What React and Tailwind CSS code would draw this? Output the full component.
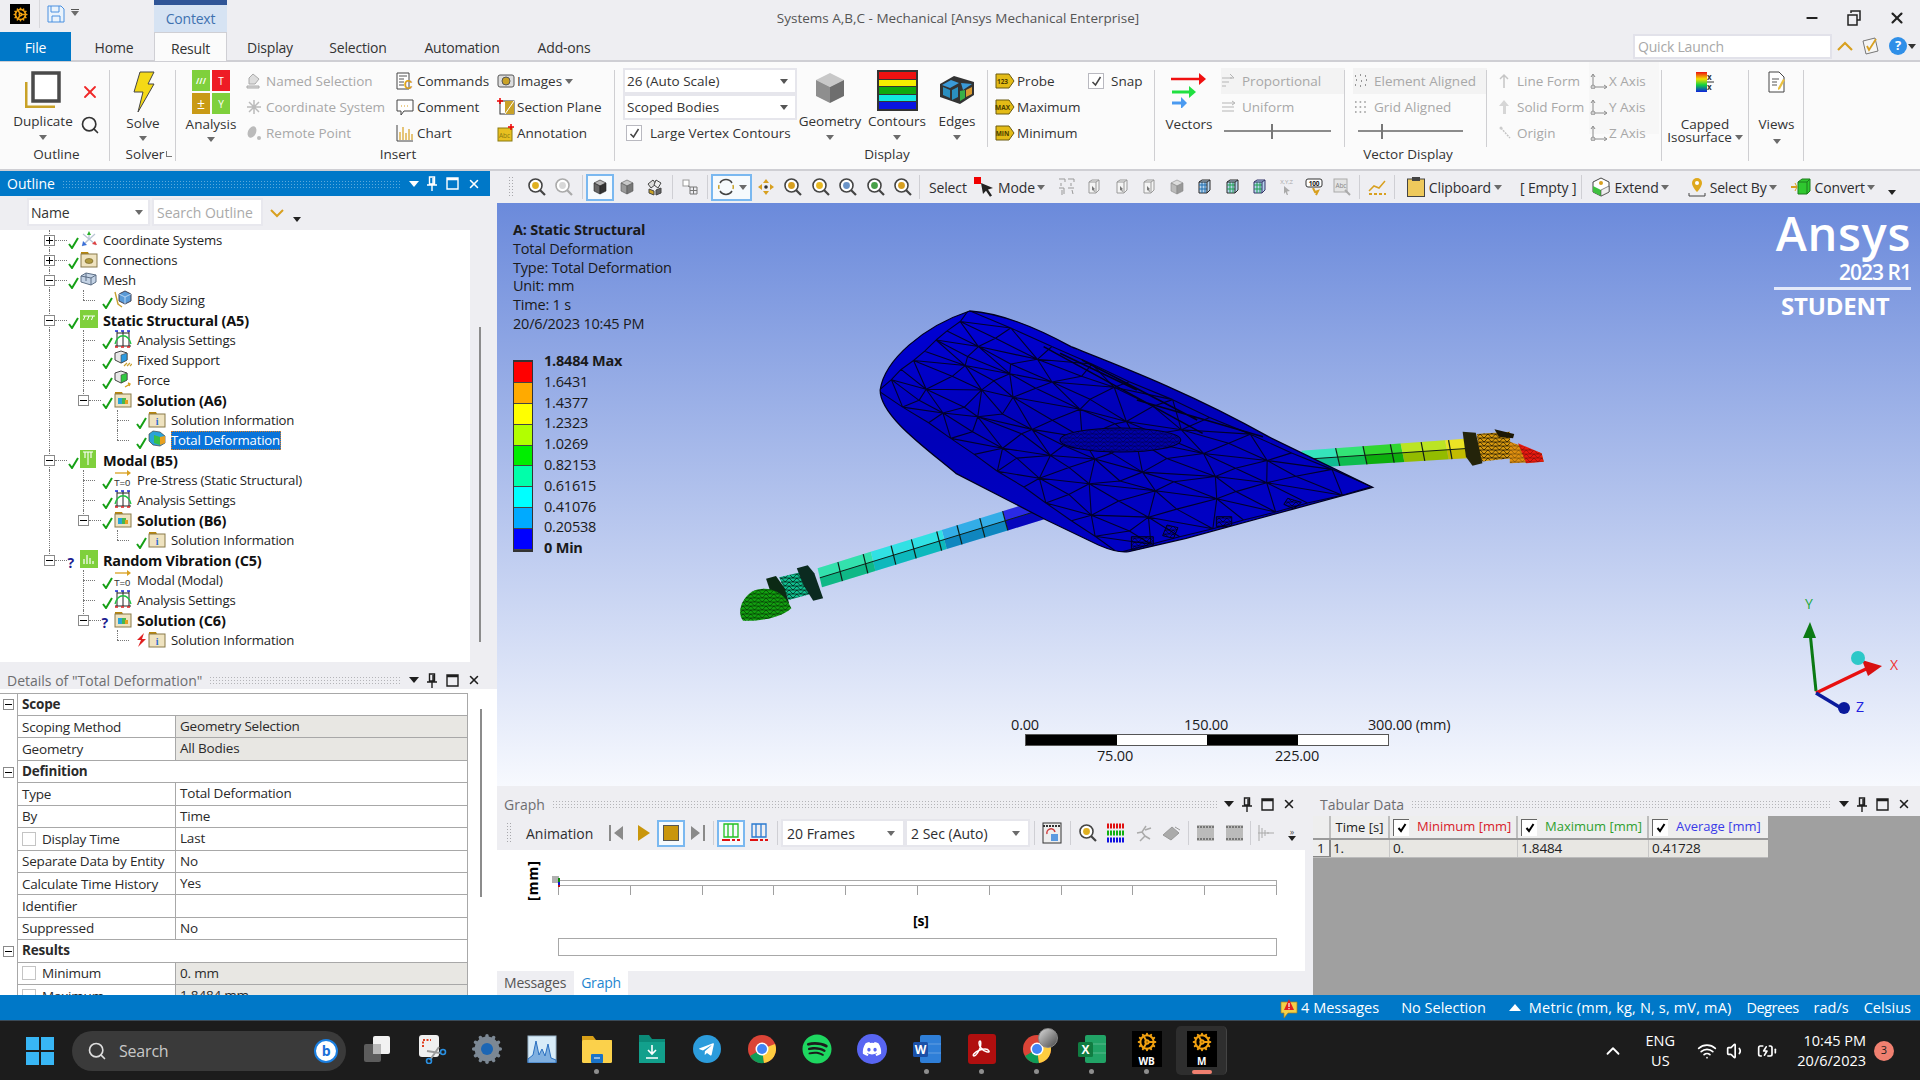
import React from "react";
import { Cog, Search, ChevronUp, Wifi, Volume1, BatteryCharging, Minus, X } from "lucide-react";
import { FaDiscord, FaSpotify, FaTelegramPlane } from "react-icons/fa";

// ---------- small drawing helpers ----------
const S = ({ w = 16, h = 16, vb = "0 0 16 16", children, className = "" }) => (
  <svg width={w} height={h} viewBox={vb} className={`shrink-0 ${className}`}>
    {children}
  </svg>
);

const Caret = ({ color = "#6b6b6b" }) => (
  <S w={8} h={5} vb="0 0 8 5">
    <path d="M0 0h8L4 5z" fill={color} />
  </S>
);

const Cube = ({ top = "#c8c8c8", left = "#9a9a9a", right = "#777", stroke = "#555" }) => (
  <S>
    <path d="M8 1l6 3-6 3-6-3z" fill={top} stroke={stroke} strokeWidth=".6" />
    <path d="M2 4l6 3v8l-6-3z" fill={left} stroke={stroke} strokeWidth=".6" />
    <path d="M14 4l-6 3v8l6-3z" fill={right} stroke={stroke} strokeWidth=".6" />
  </S>
);

const Glass = ({ fill = "#f0c040", ring = "#444" }) => (
  <S w={20} h={20} vb="0 0 20 20">
    <circle cx="8.5" cy="8.5" r="6.5" fill="#fff" stroke={ring} strokeWidth="1.6" />
    <circle cx="8.5" cy="8.5" r="3.4" fill={fill} />
    <path d="M13 13l5 5" stroke={ring} strokeWidth="2.2" />
  </S>
);

const Tag = ({ text }) => (
  <S w={20} h={16} vb="0 0 20 16">
    <path d="M1 1h13l5 7-5 7H1z" fill="#e3bb16" stroke="#6b5a10" strokeWidth="1" />
    <text x="7.5" y="11" fontSize="6.5" textAnchor="middle" fill="#4a3c00" fontWeight="700">{text}</text>
  </S>
);

const MiniBox = ({ c = "#9a9a9a" }) => (
  <S>
    <path d="M3 3l3-2h7v10l-3 3H3z" fill="#f4f4f4" stroke={c} />
    <path d="M3 3h7v11M10 3l3-2" fill="none" stroke={c} />
    <path d="M6 7l3 3-1 .4 1 2-1 .4-1-2-1 1z" fill="#777" />
  </S>
);

const GridBox = ({ a = "#1f6fb0", b = "#2a2a2a" }) => (
  <S>
    <path d="M3 3l3-2h8v10l-3 3H3z" fill="#b6d4ee" stroke={b} />
    <path d="M3 6h8M3 10h8M6 3v11M9 3v11" stroke={a} />
    <path d="M3 3h8v11M11 3l3-2" fill="none" stroke={b} />
  </S>
);

// ---------- outline tree icons ----------
const Folder = ({ children }) => (
  <S w={18} h={18} vb="0 0 18 18">
    <path d="M1 4V2h7l1 2z" fill="#b8860b" />
    <rect x="1" y="4" width="16" height="13" fill="#efe3c0" stroke="#8a7a4a" />
    {children}
  </S>
);
const SolutionContent = () => (
  <>
    <rect x="4" y="8" width="4" height="6" fill="#2aa3d8" />
    <rect x="8" y="8" width="4" height="6" fill="#48b848" />
    <rect x="11" y="10" width="3" height="4" fill="#e2a020" />
  </>
);
const TreeIcon = ({ t }) => {
  if (t === "coord")
    return (
      <S w={18} h={18} vb="0 0 18 18">
        <path d="M9 9L2 16M9 9l7 6M9 9V3M3 4l12 10M15 4L4 14" stroke="#b9c4d4" strokeWidth="1.2" />
        <path d="M9 1l2 4H7z" fill="#28b028" />
        <path d="M2 16l1-5 4 4z" fill="#3a6fd8" />
        <path d="M17 15l-5-1 3-3z" fill="#e04040" />
      </S>
    );
  if (t === "conn")
    return (
      <Folder>
        <ellipse cx="9" cy="11" rx="4" ry="2.5" fill="#b09a40" stroke="#6b5a20" strokeWidth=".6" />
      </Folder>
    );
  if (t === "mesh")
    return (
      <S w={18} h={18} vb="0 0 18 18">
        <path d="M1 6l5-3 10 2v7l-5 3-10-3z" fill="#c3d2e4" stroke="#5d6f86" />
        <path d="M1 6l10 2v7M11 8l5-3M6 3v8" fill="none" stroke="#5d6f86" />
      </S>
    );
  if (t === "sizing")
    return (
      <S w={18} h={18} vb="0 0 18 18">
        <path d="M1 2l3 12 4 3" fill="none" stroke="#c8a030" strokeWidth="1.4" />
        <path d="M11 1l6 3v7l-6 3-6-3V4z" fill="#5a9ad8" stroke="#445" />
        <path d="M5 4l6 3 6-3M11 7v7" fill="none" stroke="#dfefff" strokeWidth=".7" />
      </S>
    );
  if (t === "static")
    return (
      <S w={18} h={18} vb="0 0 18 18">
        <rect width="18" height="18" fill="#7fd03c" />
        <path d="M3 6h12" stroke="#fff" />
        <path d="M5 6L3.5 10M9 6l-1.5 4M13 6l-1.5 4" stroke="#fff" />
      </S>
    );
  if (t === "modal")
    return (
      <S w={18} h={18} vb="0 0 18 18">
        <rect width="16" height="18" fill="#7fd03c" />
        <path d="M3 2h10M8 2v13M5 2v6M11 2v6" stroke="#fff" strokeWidth="1.1" />
      </S>
    );
  if (t === "random")
    return (
      <S w={18} h={18} vb="0 0 18 18">
        <rect width="18" height="18" fill="#7fd03c" />
        <path d="M4 14V9M7 14V5M10 14V8M13 14v-3" stroke="#fff" strokeWidth="1.2" />
      </S>
    );
  if (t === "settings")
    return (
      <S w={18} h={18} vb="0 0 18 18">
        <path d="M1 16h16M3 1v15M9 1v15M15 1v15M3 3h12" stroke="#222" />
        <path d="M1 14C4 3 14 3 17 14" fill="none" stroke="#1ec040" strokeWidth="1.3" />
        <path d="M1 1h3M7 1h3M13 1h3" stroke="#1c2cd8" strokeWidth="1.5" />
        <path d="M1 17h3M7 17h3M13 17h3" stroke="#e02020" strokeWidth="1.5" />
      </S>
    );
  if (t === "fixed" || t === "force") {
    const side = t === "fixed" ? "#2d9ae0" : "#30c840";
    return (
      <S w={18} h={18} vb="0 0 18 18">
        <path d="M7 1l6 2v7l-6 3-6-3V3z" fill="#e8e8e8" stroke="#444" />
        <path d="M7 5l6-2v7l-6 3z" fill={side} stroke="#444" strokeWidth=".6" />
        {t === "fixed" ? (
          <path d="M10 16l3-3M13 16l3-3M16 16l2-2" stroke="#c8a030" strokeWidth="1.2" />
        ) : (
          <path d="M11 17l5-3M14 13l2 1-1 2" stroke="#d8a020" strokeWidth="1.4" fill="none" />
        )}
      </S>
    );
  }
  if (t === "solution")
    return (
      <Folder>
        <SolutionContent />
      </Folder>
    );
  if (t === "info")
    return (
      <Folder>
        <text x="9" y="15" fontSize="10" fontWeight="700" fontFamily="Liberation Serif" textAnchor="middle" fill="#2a6ad0">i</text>
      </Folder>
    );
  if (t === "deform")
    return (
      <S w={18} h={18} vb="0 0 18 18">
        <path d="M1 4l4-3 7 1 5 4v7l-5 3-7-1-4-4z" fill="#2aa3d8" stroke="#444" strokeWidth=".7" />
        <path d="M6 5l6 2v8l-6-2z" fill="#38c048" />
        <path d="M12 7l5-1v7l-5 2z" fill="#e8a020" />
      </S>
    );
  // pre-stress / T=0
  return (
    <S w={18} h={18} vb="0 0 18 18">
      <path d="M1 3h13" stroke="#d8a020" strokeWidth="1.3" />
      <path d="M13 0l4 3-4 3z" fill="#d8a020" />
      <text x="0" y="16" fontSize="9.5" fontFamily="Liberation Sans" fill="#333">T=0</text>
    </S>
  );
};

const Check = () => (
  <S w={11} h={12} vb="0 0 11 12">
    <path d="M1 7l3 4 6-10" fill="none" stroke="#16a016" strokeWidth="2" />
  </S>
);
const Status = ({ s }) => {
  if (s === "?") return <span className="w-[11px] text-[14px] leading-none font-bold text-[#1c1c90] mt-[6px]">?</span>;
  if (s === "bolt")
    return (
      <S w={11} h={14} vb="0 0 11 14">
        <path d="M8 0L1 7h4l-3 7 8-8H6z" fill="#e02020" />
      </S>
    );
  return (
    <span className="mt-[5px]">
      <Check />
    </span>
  );
};

const Expander = ({ open }) => (
  <span className="relative w-[11px] h-[11px] border border-[#8a8a8a] bg-white flex items-center justify-center shrink-0">
    <span className="w-[7px] h-px bg-black" />
    {!open && <span className="absolute h-[7px] w-px bg-black" />}
  </span>
);

// y center of each row is 20px apart, starting at 240
const treeRows = [
  { l: 1, exp: "+", icon: "coord", text: "Coordinate Systems", v: [49] },
  { l: 1, exp: "+", icon: "conn", text: "Connections", v: [49] },
  { l: 1, exp: "-", icon: "mesh", text: "Mesh", v: [49] },
  { l: 2, icon: "sizing", text: "Body Sizing", v: [49], half: [83] },
  { l: 1, exp: "-", icon: "static", text: "Static Structural (A5)", bold: true, v: [49] },
  { l: 2, icon: "settings", text: "Analysis Settings", v: [49, 83] },
  { l: 2, icon: "fixed", text: "Fixed Support", v: [49, 83] },
  { l: 2, icon: "force", text: "Force", v: [49, 83] },
  { l: 2, exp: "-", icon: "solution", text: "Solution (A6)", bold: true, v: [49], half: [83] },
  { l: 3, icon: "info", text: "Solution Information", v: [49, 117] },
  { l: 3, icon: "deform", text: "Total Deformation", v: [49], half: [117], sel: true },
  { l: 1, exp: "-", icon: "modal", text: "Modal (B5)", bold: true, v: [49] },
  { l: 2, icon: "pre", text: "Pre-Stress (Static Structural)", v: [49, 83] },
  { l: 2, icon: "settings", text: "Analysis Settings", v: [49, 83] },
  { l: 2, exp: "-", icon: "solution", text: "Solution (B6)", bold: true, v: [49], half: [83] },
  { l: 3, icon: "info", text: "Solution Information", v: [49], half: [117] },
  { l: 1, exp: "-", icon: "random", text: "Random Vibration (C5)", bold: true, st: "?", half: [49] },
  { l: 2, icon: "pre", text: "Modal (Modal)", v: [83] },
  { l: 2, icon: "settings", text: "Analysis Settings", v: [83] },
  { l: 2, exp: "-", icon: "solution", text: "Solution (C6)", bold: true, st: "?", half: [83] },
  { l: 3, icon: "info", text: "Solution Information", st: "bolt", half: [117] },
];

const TreeRow = ({ r }) => {
  const indent = { 1: "pl-[44px]", 2: "pl-[78px]", 3: "pl-[112px]" }[r.l];
  return (
    <div className={`relative h-[20px] flex items-center ${indent} text-[13.2px] text-[#1e1e1e]`}>
      {(r.v || []).map((x) => (
        <span key={x} className="absolute top-0 bottom-0 border-l border-dotted border-[#777]" style={{ left: x }} />
      ))}
      {(r.half || []).map((x) => (
        <span key={x} className="absolute top-0 h-[10px] border-l border-dotted border-[#777]" style={{ left: x }} />
      ))}
      <span className="relative w-[11px] h-[11px] flex items-center">
        {r.exp ? <Expander open={r.exp === "-"} /> : null}
      </span>
      <span className={`border-t border-dotted border-[#777] h-0 ${r.exp ? "w-[12px]" : "w-[12px] -ml-[6px] mr-[6px]"} shrink-0`} />
      <span className="w-[12px] flex items-center justify-center -mr-[1px]">
        <Status s={r.st} />
      </span>
      <span className="w-[18px] flex justify-center -mt-[3px] ml-[2px]">
        <TreeIcon t={r.icon} />
      </span>
      <span
        className={`ml-[5px] h-[19px] leading-[19px] whitespace-nowrap ${r.bold ? "font-bold text-[14.5px] text-[#111]" : ""} ${
          r.sel ? "bg-[#0a74da] text-white pr-[1px] outline-1 outline-dotted outline-[#e08020] -outline-offset-1" : ""
        }`}
      >
        {r.text}
      </span>
    </div>
  );
};

// ---------- docking panel header ----------
const PanelHead = ({ title, active, className = "" }) => (
  <div className={`h-[24px] flex items-center pl-[7px] pr-[9px] tracking-normal ${active ? "bg-[#0078c8] text-white" : "text-[#6d6d70]"} ${className}`}>
    <span className="text-[14px] whitespace-nowrap">{title}</span>
    <span
      className={`flex-1 h-[8px] mx-[7px] bg-[length:3px_3px] ${
        active
          ? "bg-[radial-gradient(circle,#5ba9dc_1px,transparent_1px)]"
          : "bg-[radial-gradient(circle,#b4b4b8_1px,transparent_1px)]"
      }`}
    />
    <span className={`flex items-center gap-[8.5px] ${active ? "text-white" : "text-[#1e1e1e]"}`}>
      <S w={10} h={6} vb="0 0 10 6">
        <path d="M0 0h10L5 6z" fill="currentColor" />
      </S>
      <S w={10} h={15} vb="0 0 10 15">
        <path d="M2.5 1h5v7h-5zM0 9h10M5 9v6M6 2v6" fill="none" stroke="currentColor" strokeWidth="1.4" />
      </S>
      <S w={13} h={13} vb="0 0 13 13">
        <path d="M1 1h11v11H1z M1 2.5h11" fill="none" stroke="currentColor" strokeWidth="1.4" />
      </S>
      <X size={14} strokeWidth={2.6} />
    </span>
  </div>
);

// ---------- ribbon ----------
const Sep = ({ className = "h-[91px]" }) => <span className={`w-px bg-[#cfcfd2] mt-[8px] shrink-0 ${className}`} />;

const Big = ({ w, icon, label, caret, label2 }) => (
  <div className={`${w} shrink-0 flex flex-col items-center`}>
    <div className="h-[52px] pt-[9px] flex justify-center items-start">{icon}</div>
    <div className="h-[20px] leading-[20px] whitespace-nowrap">{label}</div>
    {label2 && <div className="h-[14px] -mt-[4px] leading-[12px] whitespace-nowrap flex items-center gap-[3px]">{label2}<Caret /></div>}
    {caret && (
      <div className="h-[14px] flex items-center">
        <Caret />
      </div>
    )}
  </div>
);

const Small = ({ icon, label, off, w = "", x = "w-[21px]", trail, className = "" }) => (
  <div className={`h-[26px] flex items-center whitespace-nowrap ${w} ${off ? "text-[#a8a8a8]" : ""} ${className}`}>
    <span className={`${x} shrink-0 flex`}>{icon}</span>
    {label}
    {trail}
  </div>
);

const Combo = ({ text, w = "w-[174px]" }) => (
  <div className={`${w} h-[26px] bg-white border-2 border-[#e6e6ec] flex items-center px-[2px] justify-between`}>
    <span>{text}</span>
    <span className="mr-[5px] flex"><Caret color="#555" /></span>
  </div>
);

const CheckBox = ({ on, className = "" }) => (
  <span className={`w-[16px] h-[16px] border border-[#b9b9c0] bg-white flex items-center justify-center shrink-0 ${className}`}>
    {on && (
      <S w={11} h={11} vb="0 0 11 11">
        <path d="M1.5 6l3 3 5-8" fill="none" stroke="#444" strokeWidth="1.5" />
      </S>
    )}
  </span>
);

const Slider = ({ pos = "ml-[47px]", w = "w-[107px]" }) => (
  <div className={`relative ${w} h-[26px] flex items-center`}>
    <span className="w-full h-[2px] bg-[#8b8b8b]" />
    <span className={`absolute top-[6px] w-[5px] h-[15px] border-l-2 border-[#777] ${pos}`} />
  </div>
);

const GroupLabel = ({ children, className = "" }) => (
  <div className={`h-[20px] leading-[20px] text-center whitespace-nowrap ${className}`}>{children}</div>
);

const Ribbon = () => (
  <div className="h-[109px] bg-[#fbfbfb] border-b-2 border-[#cfcfd4] flex items-start text-[13.5px] text-[#333] tracking-normal shrink-0">
    {/* Outline */}
    <div className="w-[109px] shrink-0">
      <div className="h-[82px] flex">
        <Big
          w="w-[82px] pl-[4px]"
          icon={
            <S w={36} h={37} vb="0 0 36 37">
              <path d="M1 11v25h29" fill="none" stroke="#c9a227" strokeWidth="3" />
              <rect x="8" y="2" width="26" height="28" fill="#fff" stroke="#4a4a4a" strokeWidth="3.5" />
            </S>
          }
          label="Duplicate"
          caret
        />
        <div className="flex flex-col items-center w-[22px] pt-[20px] -ml-[3px]">
          <X size={20} className="text-[#f02828]" strokeWidth={2.2} />
          <span className="mt-[13px] flex">
            <Search size={20} className="text-[#333]" />
          </span>
        </div>
      </div>
      <GroupLabel className="pl-[4px]">Outline</GroupLabel>
    </div>
    <Sep />
    {/* Solver */}
    <div className="w-[65px] shrink-0 relative">
      <div className="h-[82px] flex">
        <Big
          w="w-[66px]"
          icon={
            <S w={24} h={42} vb="0 0 24 42">
              <path d="M9 1h14l-6 12h6L7 41l5-20H3z" fill="#f4d916" stroke="#444" strokeWidth="1" />
            </S>
          }
          label="Solve"
          caret
        />
      </div>
      <GroupLabel className="pl-[5px]">Solver</GroupLabel>
      <span className="absolute right-[3px] top-[89px] w-[6px] h-[6px] border-l border-b border-[#777]" />
    </div>
    <Sep />
    {/* Insert */}
    <div className="w-[438px] shrink-0">
      <div className="h-[82px] flex">
        <Big
          w="w-[70px]"
          icon={
            <span className="grid grid-cols-2 gap-[2px] w-[38px] -mt-[1px]">
              <span className="h-[21px] bg-[#7fd03c] flex items-center justify-center text-white text-[8px] font-bold leading-none">///</span>
              <span className="h-[21px] bg-[#ee1c25] flex items-center justify-center text-white text-[10px] leading-none">T</span>
              <span className="h-[21px] bg-[#c99a16] flex items-center justify-center text-white text-[14px] leading-none">±</span>
              <span className="h-[21px] bg-[#7fd03c] flex items-center justify-center text-white text-[10px] leading-none">Y</span>
            </span>
          }
          label="Analysis"
          caret
        />
        <div className="w-[150px] pt-[6px] shrink-0">
          <Small off x="w-[20px]" label="Named Selection" icon={<S><path d="M1 13h12v2H1zM3 11V5l4-4 6 5-4 5z" fill="#ddd" stroke="#aaa" /></S>} />
          <Small off x="w-[20px]" label="Coordinate System" icon={<S><path d="M8 1v14M1 8h14M3 3l10 10M13 3L3 13" stroke="#bbb" strokeWidth="1.5" /></S>} />
          <Small off x="w-[20px]" label="Remote Point" icon={<S><ellipse cx="6" cy="7" rx="4" ry="6" fill="#bbb" transform="rotate(25 6 7)" /><circle cx="13" cy="13" r="2" fill="#bbb" /></S>} />
        </div>
        <div className="w-[101px] pt-[6px] shrink-0">
          <Small x="w-[21px]" label="Commands" icon={<S w={18} h={18} vb="0 0 18 18"><path d="M1 1h12v16H1z" fill="#fff" stroke="#444" /><path d="M3 4h8M3 7h5M3 10h5M3 13h5" stroke="#555" /><text x="8" y="17" fontSize="12" fontWeight="700" fill="#d8a020" fontFamily="Liberation Sans">C</text></S>} />
          <Small x="w-[21px]" label="Comment" icon={<S w={18} h={18} vb="0 0 18 18"><path d="M1 2h16v11H8l-3 4v-4H1z" fill="#fff" stroke="#444" /><path d="M5 8h8" stroke="#d8a020" strokeDasharray="1 2" /></S>} />
          <Small x="w-[21px]" label="Chart" icon={<S w={18} h={18} vb="0 0 18 18"><path d="M1 1v16h16" fill="none" stroke="#444" /><path d="M4 16V8M7 16V3M10 16V9M13 16V5M16 16v-6" stroke="#d8a020" strokeWidth="1.2" /></S>} />
        </div>
        <div className="pt-[6px]">
          <Small x="w-[20px]" label="Images" trail={<span className="ml-[3px]"><Caret /></span>} icon={<S w={18} h={18} vb="0 0 18 18"><rect x="1" y="3" width="16" height="12" rx="2" fill="#ddd" stroke="#555" /><circle cx="9" cy="9" r="4" fill="#c9a227" stroke="#555" /></S>} />
          <Small x="w-[20px]" label="Section Plane" icon={<S w={18} h={18} vb="0 0 18 18"><rect x="3" y="3" width="14" height="13" fill="#fff" stroke="#333" /><path d="M8 3h9v13H8z" fill="#c9a227" /><path d="M8 16l9-13" stroke="#fff" /><path d="M3 0v6M0 3h6" stroke="#e00" strokeWidth="1.5" /></S>} />
          <Small x="w-[20px]" label="Annotation" icon={<S w={18} h={18} vb="0 0 18 18"><rect x="1" y="4" width="14" height="13" fill="#e8c020" stroke="#8a7a10" /><text x="2" y="14" fontSize="6.5" fill="#8a7a10">Abc</text><path d="M14 0v6M11 3h6" stroke="#e00" strokeWidth="1.5" /></S>} />
        </div>
      </div>
      <GroupLabel className="pl-[6px]">Insert</GroupLabel>
    </div>
    <Sep />
    {/* Display */}
    <div className="w-[539px] shrink-0">
      <div className="h-[82px] flex">
        <div className="ml-[8px] w-[174px] pt-[6px] shrink-0">
          <Combo text="26 (Auto Scale)" />
          <Combo text="Scoped Bodies" />
          <div className="h-[26px] flex items-center">
            <CheckBox on className="ml-[3px] mr-[8px]" />
            <span className="whitespace-nowrap">Large Vertex Contours</span>
          </div>
        </div>
        <Big
          w="w-[66px]"
          icon={
            <span className="pt-[1px] flex">
              <S w={32} h={32} vb="0 0 32 32">
                <path d="M16 1l14 7-14 7L2 8z" fill="#c8c8c8" />
                <path d="M2 8l14 7v16L2 24z" fill="#8e8e8e" />
                <path d="M30 8l-14 7v16l14-7z" fill="#6e6e6e" />
              </S>
            </span>
          }
          label="Geometry"
          caret
        />
        <Big
          w="w-[68px]"
          icon={
            <span className="w-[41px] h-[41px] bg-[#333] p-[2px] flex flex-col gap-px -mt-[1px]">
              <span className="flex-1 bg-[#ee1111]" />
              <span className="flex-1 bg-[#f6ee00]" />
              <span className="flex-1 bg-[#0fa80f]" />
              <span className="flex-1 bg-[#10e8e0]" />
              <span className="flex-1 bg-[#0a14e0]" />
            </span>
          }
          label="Contours"
          caret
        />
        <Big
          w="w-[52px]"
          icon={
            <span className="pt-[4px] flex">
              <S w={36} h={30} vb="0 0 36 30">
                <path d="M1 9l14-8 20 6v13l-14 9-20-7z" fill="#333" />
                <path d="M3 10l9-5 8 3-9 5zM22 8l11 1-9 6z" fill="#3a9ad8" />
                <path d="M4 12l7 3v8l-7-3zM13 15l6-3v10l-6 3z" fill="#2a8fc0" />
                <path d="M21 16l5-1v8l-5 3z" fill="#38b048" />
                <path d="M27 15l6-3v7l-6 3z" fill="#d89a30" />
              </S>
            </span>
          }
          label="Edges"
          caret
        />
        <Sep className="h-[77px] ml-[4px]" />
        <div className="w-[100px] pl-[7px] pt-[6px] shrink-0">
          <Small x="w-[22px]" label="Probe" icon={<Tag text="123" />} />
          <Small x="w-[22px]" label="Maximum" icon={<Tag text="MAX" />} />
          <Small x="w-[22px]" label="Minimum" icon={<Tag text="MIN" />} />
        </div>
        <div className="pt-[6px]">
          <Small x="w-[23px]" label="Snap" icon={<CheckBox on />} />
        </div>
      </div>
      <GroupLabel className="pl-[5px]">Display</GroupLabel>
    </div>
    <Sep />
    {/* Vector display */}
    <div className="w-[506px] shrink-0">
      <div className="h-[82px] flex">
        <Big
          w="w-[66px] pl-[2px]"
          icon={
            <span className="flex pt-[1px]">
              <S w={36} h={36} vb="0 0 36 36">
                <path d="M0 7h28" stroke="#f01010" strokeWidth="2.5" />
                <path d="M28 1l7 6-7 6z" fill="#f01010" />
                <path d="M1 20h17" stroke="#20e040" strokeWidth="3" />
                <path d="M18 14l7 6-7 6z" fill="#20e040" />
                <path d="M1 31h9" stroke="#4a9af0" strokeWidth="3" />
                <path d="M10 25l6 6-6 6z" fill="#4a9af0" />
              </S>
            </span>
          }
          label="Vectors"
        />
        <div className="w-[124px] pt-[6px] shrink-0 text-[#a8a8a8]">
          <Small off x="w-[21px]" className="bg-[#f3f3f3]" label="Proportional" icon={<S><path d="M1 5h10M1 9h7M1 13h4M9 1l4 4-4 0" stroke="#b5b5b5" fill="none" /></S>} />
          <Small off x="w-[21px]" label="Uniform" icon={<S><path d="M1 4h12M1 8h12M1 12h12M11 2l3 2-3 2" stroke="#b5b5b5" fill="none" /></S>} />
          <div className="pl-[3px] -mt-[2px]"><Slider /></div>
        </div>
        <Sep className="h-[77px] -ml-[1px]" />
        <div className="w-[142px] pl-[8px] pt-[6px] shrink-0">
          <Small off x="w-[21px]" className="bg-[#f3f3f3]" label="Element Aligned" icon={<S><path d="M2 3h2M7 2h2M12 3h2M3 7h2M8 8h2M13 7h2M2 12h2M7 13h2M12 12h2" stroke="#777" strokeWidth="1.6" strokeDasharray="1 1" /></S>} />
          <Small off x="w-[21px]" label="Grid Aligned" icon={<S><path d="M2 3h12M2 8h12M2 13h12" stroke="#999" strokeWidth="1.6" strokeDasharray="1.6 3" /></S>} />
          <div className="pl-[5px] -mt-[2px]"><Slider w="w-[105px]" pos="ml-[23px]" /></div>
        </div>
        <Sep className="h-[77px] -ml-[1px]" />
        <div className="w-[102px] pl-[11px] pt-[6px] shrink-0">
          <Small off x="w-[19px]" label="Line Form" icon={<S><path d="M6 15V2M2 6l4-4 4 4" stroke="#c6c6c6" strokeWidth="1.5" fill="none" /></S>} />
          <Small off x="w-[19px]" label="Solid Form" icon={<S><path d="M5 15V7H1l5-6 5 6H8v8z" fill="#d6d6d6" /></S>} />
          <Small off x="w-[19px]" label="Origin" icon={<S><path d="M3 3l9 10" stroke="#c6c6c6" strokeWidth="1.5" strokeDasharray="2 1" /><circle cx="3" cy="3" r="1.5" fill="#ccc" /></S>} />
        </div>
        <div className="w-[70px] pt-[6px] shrink-0 bg-[#f7f7f7] h-[72px]">
          {["X Axis", "Y Axis", "Z Axis"].map((t) => (
            <Small key={t} off x="w-[20px]" label={t} icon={<S w={19} h={16} vb="0 0 19 16"><path d="M4 14V2M2 4l2-3 2 3M4 14h13M15 12l3 2-3 2" stroke="#8a8a8a" fill="none" /><circle cx="4" cy="14" r="2" fill="#ccc" stroke="#999" /></S>} />
          ))}
        </div>
      </div>
      <GroupLabel>Vector Display</GroupLabel>
    </div>
    <Sep />
    <div className="w-[86px] shrink-0">
      <Big
        w="w-[86px]"
        icon={
          <span className="pt-[1px] flex">
            <S w={18} h={22} vb="0 0 18 22">
              <defs>
                <linearGradient id="iso" x1="0" x2="0" y1="0" y2="1">
                  <stop offset="0" stopColor="#ee1111" />
                  <stop offset=".35" stopColor="#f0e000" />
                  <stop offset=".65" stopColor="#10d040" />
                  <stop offset="1" stopColor="#1020e0" />
                </linearGradient>
              </defs>
              <rect width="11" height="20" fill="url(#iso)" />
              <path d="M11 10h7" stroke="#333" />
              <text x="11" y="8" fontSize="8" fontWeight="700" fill="#333">x</text>
              <text x="11" y="18" fontSize="8" fontWeight="700" fill="#333">x</text>
            </S>
          </span>
        }
        label="Capped"
        label2="Isosurface"
      />
    </div>
    <Sep />
    <div className="w-[54px] shrink-0">
      <Big
        w="w-[54px] pl-[1px]"
        icon={
          <S w={18} h={22} vb="0 0 18 22">
            <path d="M1 1h10l5 5v15H1z" fill="#fff" stroke="#444" />
            <path d="M4 8h7M4 11h5M4 14h5" stroke="#555" />
            <path d="M15 8l2 1-5 9-2 1v-2z" fill="#e8c040" />
          </S>
        }
        label="Views"
        caret
      />
    </div>
    <Sep />
  </div>
);

// ---------- result toolbar ----------
const T = ({ w = "w-[27.5px]", children, box }) => (
  <span className={`${w} h-[27px] shrink-0 flex items-center justify-center ${box ? "border-2 border-[#7ab8f0] bg-[#f6fafd]" : ""}`}>
    {children}
  </span>
);
const VSep = ({ w = "w-[8px]" }) => (
  <span className={`${w} h-[24px] flex justify-center shrink-0`}>
    <span className="w-px h-full bg-[#cfcfd4]" />
  </span>
);
const Grip = () => (
  <span className="w-[5px] h-[22px] bg-[radial-gradient(circle,#a8a8ac_1px,transparent_1px)] bg-[length:3px_3px] shrink-0" />
);

const ViewToolbar = () => (
  <div className="h-[32px] flex items-center text-[14px] text-[#2d2d30] tracking-[-0.15px] bg-[#eeeef2] shrink-0">
    <span className="w-[26px] flex justify-center"><Grip /></span>
    <T><Glass fill="#e0b020" /></T>
    <T><Glass fill="#d8d8d8" ring="#aaa" /></T>
    <VSep />
    <T box><Cube top="#b8b8b8" left="#666" right="#333" stroke="#222" /></T>
    <T><Cube /></T>
    <T>
      <S w={18} h={18} vb="0 0 18 18">
        <path d="M2 6l5-4 3 4-5 4z" fill="#ddd" stroke="#444" />
        <path d="M10 2l5 3-3 5-4-3z" fill="#eee" stroke="#444" />
        <path d="M3 11l5 2v4l-5-2z" fill="#c9a227" stroke="#444" />
        <path d="M10 12l5-2v5l-5 2z" fill="#666" stroke="#444" />
      </S>
    </T>
    <VSep />
    <T>
      <S>
        <rect x="1" y="1" width="6" height="6" fill="#fff" stroke="#999" />
        <path d="M8 8h7v7H8zM11.5 8v7M8 11.5h7M6 7l2 1" fill="none" stroke="#777" />
      </S>
    </T>
    <VSep w="w-[7px]" />
    <T box w="w-[41px]">
      <span className="flex items-center gap-[4px]">
        <S w={18} h={18} vb="0 0 18 18">
          <path d="M3 5a7 7 0 0 1 12 0M15 13a7 7 0 0 1-12 0" fill="none" stroke="#444" strokeWidth="1.5" />
          <path d="M16 7a7 7 0 0 1 0 4M2 11a7 7 0 0 1 0-4" fill="none" stroke="#c9a227" strokeWidth="1.5" />
        </S>
        <Caret />
      </span>
    </T>
    <T>
      <S w={18} h={18} vb="0 0 18 18">
        <path d="M9 1l3 4H6zM9 17l-3-4h6zM1 9l4-3v6zM17 9l-4 3V6z" fill="#d8a020" />
        <circle cx="9" cy="9" r="1.8" fill="#333" />
      </S>
    </T>
    <T><Glass fill="#d8a020" /></T>
    <T><Glass fill="#e8b820" /></T>
    <T><Glass fill="#6a94c8" /></T>
    <T><Glass fill="#48a048" /></T>
    <T><Glass fill="#d8a020" /></T>
    <VSep w="w-[4px]" />
    <span className="w-[50px] pl-[8px]">Select</span>
    <T w="w-[27px]">
      <S w={22} h={20} vb="0 0 22 20">
        <rect x="0" y="0" width="7" height="7" fill="#f00000" />
        <path d="M7 6l12 5-5 1.5 4 6-2 1.2-4-6L9 17z" fill="#222" />
      </S>
    </T>
    <span>Mode</span>
    <span className="ml-[2px] mr-[8px] flex"><Caret /></span>
    <T>
      <S w={18} h={18} vb="0 0 18 18">
        <path d="M1 1h6v3M10 1h6v3M3 5v3M13 5v3M1 10h5v6M10 10h6M4 12v5M14 12l1 4" stroke="#999" fill="none" />
      </S>
    </T>
    <T><MiniBox /></T>
    <T><MiniBox /></T>
    <T><MiniBox /></T>
    <T><Cube top="#ddd" left="#bbb" right="#999" stroke="#888" /></T>
    <T><GridBox /></T>
    <T><GridBox a="#1f9f50" /></T>
    <T><GridBox a="#1f9f50" b="#336" /></T>
    <T>
      <span className="flex flex-col items-center leading-none">
        <span className="text-[6px] text-[#aaa]">X,Y,Z</span>
        <S w={10} h={10} vb="0 0 10 10"><path d="M2 1l6 5-3 .5 1 3.5-1 .4-1.5-3.4L2 9z" fill="#aaa" /></S>
      </span>
    </T>
    <T>
      <S w={18} h={18} vb="0 0 18 18">
        <rect x="1" y="1" width="16" height="8" rx="2" fill="#fff" stroke="#333" />
        <text x="9" y="7.5" fontSize="6.5" textAnchor="middle" fontWeight="700" fill="#222">100</text>
        <path d="M8 10l2 4 3-1-2 4" stroke="#d8a020" strokeWidth="2" fill="none" />
      </S>
    </T>
    <T>
      <S w={18} h={18} vb="0 0 18 18">
        <rect x="1" y="1" width="13" height="13" fill="#e4e4e4" stroke="#aaa" />
        <text x="2.5" y="10" fontSize="6.5" fill="#888">Abc</text>
        <path d="M12 12l5 5" stroke="#aaa" strokeWidth="2" />
      </S>
    </T>
    <VSep />
    <T>
      <S w={19} h={18} vb="0 0 19 18">
        <path d="M1 13l5-5 5 2 6-7" fill="none" stroke="#d8a020" strokeWidth="1.5" />
        <path d="M1 16h17" stroke="#d8a020" strokeWidth="2" strokeDasharray="3 2" />
      </S>
    </T>
    <VSep w="w-[8px]" />
    <span className="w-[8px] shrink-0" />
    <S w={18} h={20} vb="0 0 18 20">
      <rect x=".5" y="2" width="17" height="17.5" fill="#eec95c" stroke="#444" />
      <rect x="5" y="0" width="8" height="4" fill="#444" />
    </S>
    <span className="ml-[4px]">Clipboard</span>
    <span className="ml-[3px] flex"><Caret /></span>
    <span className="ml-[18px] whitespace-pre">[ Empty ]</span>
    <span className="w-[10px] shrink-0 flex justify-center"><VSep w="w-[1px]" /></span>
    <span className="ml-[6px] flex">
      <S w={18} h={20} vb="0 0 18 20">
        <path d="M9 1l8 4v10l-8 4-8-4V5z" fill="#fff" stroke="#444" />
        <path d="M1 9l8 4v6l-8-4z" fill="#3fc040" />
        <path d="M9 13l8-4v6l-8 4z" fill="#eee" stroke="#444" strokeWidth=".6" />
        <circle cx="9" cy="6" r="2" fill="#d8a020" />
      </S>
    </span>
    <span className="ml-[4px]">Extend</span>
    <span className="ml-[2px] flex"><Caret /></span>
    <span className="ml-[19px] flex">
      <S w={18} h={20} vb="0 0 18 20">
        <path d="M9 1a5 5 0 0 1 5 5c0 4-5 9-5 9s-5-5-5-9a5 5 0 0 1 5-5z" fill="#dfa81c" />
        <circle cx="9" cy="6" r="2" fill="#fff" />
        <path d="M1 16v3h16v-3" fill="none" stroke="#444" />
      </S>
    </span>
    <span className="ml-[4px]">Select By</span>
    <span className="ml-[2px] flex"><Caret /></span>
    <span className="ml-[14px] flex">
      <S w={20} h={18} vb="0 0 20 18">
        <path d="M0 9h6" stroke="#d8a020" strokeWidth="2" />
        <path d="M4 5l2 4-2 4" fill="none" stroke="#d8a020" />
        <path d="M7 4l4-3h8v12l-3 3H7z" fill="#2fc82f" stroke="#1c7c1c" />
        <path d="M7 4h9v12M16 4l3-3" fill="none" stroke="#1c7c1c" />
      </S>
    </span>
    <span className="ml-[4px]">Convert</span>
    <span className="ml-[2px] flex"><Caret /></span>
    <span className="ml-[13px] mt-[11px] flex"><Caret color="#222" /></span>
  </div>
);

// ---------- 3D model, drawn in its own stretched coordinate box ----------
const corner = { A: [455, 63], B: [1190, 592], C: [725, 787], D: [292, 300] };
const jit = (i, j, k) => {
  const s = Math.sin(i * 12.9898 + j * 78.233 + k * 37.719) * 43758.5453;
  return s - Math.floor(s) - 0.5;
};
const wingPoint = (u, v) => {
  const tx = corner.A[0] + (corner.B[0] - corner.A[0]) * u;
  const ty = corner.A[1] + (corner.B[1] - corner.A[1]) * u;
  const bx = corner.D[0] + (corner.C[0] - corner.D[0]) * u;
  const by = corner.D[1] + (corner.C[1] - corner.D[1]) * u;
  return [tx + (bx - tx) * v, ty + (by - ty) * v];
};
const wingMesh = () => {
  const nu = 10;
  const nv = 8;
  const pts = [];
  for (let i = 0; i <= nu; i++) {
    pts[i] = [];
    for (let j = 0; j <= nv; j++) {
      const p = wingPoint(i / nu, j / nv);
      const edge = i === 0 || j === 0 || i === nu || j === nv ? 0.2 : 1;
      pts[i][j] = [p[0] + jit(i, j, 1) * 34 * edge, p[1] + jit(i, j, 2) * 26 * edge];
    }
  }
  let d = "";
  const seg = (a, b) => {
    d += `M${a[0].toFixed(1)} ${a[1].toFixed(1)}L${b[0].toFixed(1)} ${b[1].toFixed(1)}`;
  };
  for (let i = 0; i <= nu; i++) {
    for (let j = 0; j <= nv; j++) {
      if (i < nu) seg(pts[i][j], pts[i + 1][j]);
      if (j < nv) seg(pts[i][j], pts[i][j + 1]);
      if (i < nu && j < nv) {
        if ((i + j) % 2) seg(pts[i][j], pts[i + 1][j + 1]);
        else seg(pts[i + 1][j], pts[i][j + 1]);
      }
    }
  }
  return d;
};
const wingLines = wingMesh();

const lerp = (a, b, t) => a + (b - a) * t;
const mid = (a, b) => [(a[0] + b[0]) / 2, (a[1] + b[1]) / 2];
const rodSeg = (top0, top1, bot0, bot1, t0, t1) => {
  const pts = [
    [lerp(top0[0], top1[0], t0), lerp(top0[1], top1[1], t0)],
    [lerp(top0[0], top1[0], t1), lerp(top0[1], top1[1], t1)],
    [lerp(bot0[0], bot1[0], t1), lerp(bot0[1], bot1[1], t1)],
    [lerp(bot0[0], bot1[0], t0), lerp(bot0[1], bot1[1], t0)],
  ];
  return pts.map((p) => p.map((n) => n.toFixed(1)).join(",")).join(" ");
};

const Rod = ({ top0, top1, bot0, bot1, segs, rings }) => (
  <g>
    {segs.map(([t0, t1, c], i) => (
      <polygon key={i} points={rodSeg(top0, top1, bot0, bot1, t0, t1)} fill={c} />
    ))}
    <polygon points={rodSeg(top0, top1, mid(top0, bot0), mid(top1, bot1), 0, 1)} fill="#ffffff" opacity=".14" />
    <polygon points={rodSeg(mid(top0, bot0), mid(top1, bot1), bot0, bot1, 0, 1)} fill="#000000" opacity=".16" />
    {rings.map((t) => (
      <line key={t} x1={lerp(top0[0], top1[0], t)} y1={lerp(top0[1], top1[1], t)} x2={lerp(bot0[0], bot1[0], t)} y2={lerp(bot0[1], bot1[1], t)} stroke="#102018" strokeWidth="1.2" vectorEffect="non-scaling-stroke" />
    ))}
    <line x1={mid(top0, bot0)[0]} y1={mid(top0, bot0)[1]} x2={mid(top1, bot1)[0]} y2={mid(top1, bot1)[1]} stroke="#102018" strokeWidth="1" vectorEffect="non-scaling-stroke" />
  </g>
);

const Model = () => (
  <svg viewBox="0 0 1568 1050" preserveAspectRatio="none" className="absolute left-[223px] top-[87px] w-[860px] h-[350px]">
    <defs>
      <clipPath id="wingClip">
        <path d="M455 63C520 70 590 125 640 170C700 210 850 300 1000 440L1190 592L1050 655L850 745L745 785Q725 790 690 765L595 690L430 550C380 480 292 380 292 300C300 210 370 110 455 63Z" />
      </clipPath>
      <linearGradient id="wingFill" x1="0" x2="0.3" y1="0" y2="1">
        <stop offset="0" stopColor="#0000d8" />
        <stop offset=".5" stopColor="#0000b8" />
        <stop offset="1" stopColor="#0000c4" />
      </linearGradient>
      <pattern id="fineMesh" width="14" height="12" patternUnits="userSpaceOnUse">
        <path d="M0 0L14 0M0 0L7 12L14 0M0 12H14" fill="none" stroke="#000" strokeWidth="1.4" />
      </pattern>
    </defs>
    <Rod
      top0={[640, 600]} top1={[178, 835]} bot0={[650, 658]} bot1={[186, 892]}
      segs={[[0, 0.27, "#0808e0"], [0.27, 0.51, "#12a0e4"], [0.51, 0.79, "#10dce0"], [0.79, 1, "#12dca0"]]}
      rings={[0.27, 0.36, 0.45, 0.53, 0.63, 0.71, 0.82, 0.92]}
    />
    <Rod
      top0={[1060, 482]} top1={[1372, 445]} bot0={[1068, 534]} bot1={[1378, 503]}
      segs={[[0, 0.2, "#14e0b0"], [0.2, 0.36, "#12e060"], [0.36, 0.58, "#10d010"], [0.58, 0.84, "#b0e000"], [0.84, 1, "#e8e000"]]}
      rings={[0.2, 0.36, 0.52, 0.7, 0.86]}
    />
    {/* left head */}
    <path d="M108 862L165 840L180 905L125 930Z" fill="#10c090" />
    <path d="M108 862L165 840L180 905L125 930Z" fill="url(#fineMesh)" />
    <path d="M140 835L160 826L172 850L188 925L170 932L152 885Z" fill="#0b2a20" />
    <path d="M84 866L102 858L118 895L126 940L106 948L92 905Z" fill="#0b2a14" />
    <path d="M58 905C85 885 115 900 130 955C110 985 70 995 42 992C30 965 40 925 58 905Z" fill="#12a010" />
    <path d="M58 905C85 885 115 900 130 955C110 985 70 995 42 992C30 965 40 925 58 905Z" fill="url(#fineMesh)" opacity=".75" />
    {/* right head */}
    <path d="M1380 432L1440 425L1442 505L1385 515Z" fill="#d89a10" />
    <path d="M1380 432L1440 425L1442 505L1385 515Z" fill="url(#fineMesh)" />
    <path d="M1354 425L1378 428L1390 520L1372 527L1360 500Z" fill="#24240a" />
    <path d="M1412 418L1448 432L1446 445L1420 440Z" fill="#1c1806" />
    <path d="M1440 455L1498 490L1502 515L1440 520Z" fill="#e09010" />
    <path d="M1455 460L1498 490L1502 515L1470 520Z" fill="#ea1a10" />
    <path d="M1440 455L1498 490L1502 515L1440 520Z" fill="url(#fineMesh)" opacity=".5" />
    {/* wing */}
    <path d="M455 63C520 70 590 125 640 170C700 210 850 300 1000 440L1190 592L1050 655L850 745L745 785Q725 790 690 765L595 690L430 550C380 480 292 380 292 300C300 210 370 110 455 63Z" fill="url(#wingFill)" />
    <g clipPath="url(#wingClip)">
      <path d={wingLines} fill="none" stroke="#01012c" strokeWidth="1.1" vectorEffect="non-scaling-stroke" />
      <path d="M590 170L880 430M620 190L760 300M660 210L870 390M760 330L990 440" fill="none" stroke="#010120" strokeWidth="1.6" vectorEffect="non-scaling-stroke" />
      <ellipse cx="730" cy="450" rx="110" ry="36" fill="#0000a8" stroke="#010120" strokeWidth="1.2" vectorEffect="non-scaling-stroke" />
      <ellipse cx="730" cy="450" rx="108" ry="34" fill="url(#fineMesh)" opacity=".55" />
      <path d="M750 740h40v40h-40zM815 705l20 8-8 32-20-8zM905 680h28v30h-28zM1035 625l25 12-14 20-18-14z" fill="url(#fineMesh)" stroke="#010120" strokeWidth="1" vectorEffect="non-scaling-stroke" />
    </g>
    <path d="M455 63C520 70 590 125 640 170C700 210 850 300 1000 440L1190 592L1050 655L850 745L745 785Q725 790 690 765L595 690L430 550C380 480 292 380 292 300C300 210 370 110 455 63Z" fill="none" stroke="#010120" strokeWidth="1.3" vectorEffect="non-scaling-stroke" />
  </svg>
);

const legend = [
  ["1.8484 Max", "bg-[#ff0000]", true],
  ["1.6431", "bg-[#ffaa00]"],
  ["1.4377", "bg-[#ffff00]"],
  ["1.2323", "bg-[#b2ff00]"],
  ["1.0269", "bg-[#00ee00]"],
  ["0.82153", "bg-[#00ffaa]"],
  ["0.61615", "bg-[#00ffff]"],
  ["0.41076", "bg-[#00aaff]"],
  ["0.20538", "bg-[#0000ff]"],
  ["0 Min", "", true],
];

const Viewport = () => (
  <div className="relative h-[583px] bg-[linear-gradient(#6b8adb,#f7f9fe)] overflow-hidden text-[14.5px] text-[#1a1a1a] shrink-0">
    <div className="absolute left-[16px] top-[18px] leading-[18.8px]">
      <div className="font-bold">A: Static Structural</div>
      <div>Total Deformation</div>
      <div>Type: Total Deformation</div>
      <div>Unit: mm</div>
      <div>Time: 1 s</div>
      <div>20/6/2023 10:45 PM</div>
    </div>
    {/* legend */}
    <div className="absolute left-[16px] top-[157px] flex">
      <div className="w-[20px] h-[192px] border-y-2 border-x border-[#333] flex flex-col">
        {legend.slice(0, 9).map(([t, c]) => (
          <span key={t} className={`flex-1 border-b border-[#444] ${c}`} />
        ))}
      </div>
      <div className="ml-[11px] -mt-[9px]">
        {legend.map(([t, , b]) => (
          <div key={t} className={`h-[20.8px] leading-[20.8px] whitespace-nowrap ${b ? "font-bold" : ""}`}>{t}</div>
        ))}
      </div>
    </div>
    <Model />
    {/* logo */}
    <div className="absolute right-[9px] top-[2px] w-[140px] flex flex-col items-end text-white">
      <div className="text-[47px] leading-[56px] font-semibold tracking-[0.7px]">Ansys</div>
      <div className="text-[21px] leading-[22px] font-semibold tracking-[-1px]">2023 R1</div>
      <div className="w-[137px] h-[3px] bg-[#e4eafa] mt-[4px]" />
      <div className="self-start text-[24px] leading-[30px] font-bold tracking-[-0.2px] ml-[10px] mt-[1px]">STUDENT</div>
    </div>
    {/* triad */}
    <svg viewBox="0 0 120 140" className="absolute left-[1283px] top-[395px] w-[120px] h-[140px]">
      <path d="M36 93L30 34" stroke="#0b7a14" strokeWidth="3" />
      <path d="M30 24l-7 16h13z" fill="#0b7a14" />
      <path d="M36 95l52-25" stroke="#e81010" strokeWidth="3.5" />
      <path d="M102 68l-20-6 6 16z" fill="#d81010" />
      <path d="M36 95l25 15" stroke="#0a1a9c" strokeWidth="3.5" />
      <circle cx="64" cy="110" r="6" fill="#0a1a9c" />
      <circle cx="78" cy="60" r="7" fill="#2dc8c8" />
      <text x="25" y="11" fontSize="14" fill="#22a83a" fontFamily="Open Sans">Y</text>
      <text x="110" y="72" fontSize="14" fill="#f03030" fontFamily="Open Sans">X</text>
      <text x="76" y="114" fontSize="14" fill="#2020e0" fontFamily="Open Sans">Z</text>
    </svg>
    {/* scale */}
    <div className="absolute left-[528px] top-[514px] w-[440px] h-[70px]">
      <div className="absolute left-0 -translate-x-1/2 -top-[3px]">0.00</div>
      <div className="absolute left-[181px] -translate-x-1/2 -top-[3px]">150.00</div>
      <div className="absolute left-[343px] -top-[3px] whitespace-nowrap">300.00 (mm)</div>
      <div className="absolute left-0 top-[17px] w-[364px] h-[12px] flex border border-[#555] bg-white">
        <span className="w-1/4 bg-black" />
        <span className="w-1/4" />
        <span className="w-1/4 bg-black" />
        <span className="w-1/4" />
      </div>
      <div className="absolute left-[90px] -translate-x-1/2 top-[28px]">75.00</div>
      <div className="absolute left-[272px] -translate-x-1/2 top-[28px]">225.00</div>
    </div>
  </div>
);

// ---------- details grid ----------
const details = [
  { sec: "Scope" },
  { k: "Scoping Method", v: "Geometry Selection", ro: true },
  { k: "Geometry", v: "All Bodies", ro: true },
  { sec: "Definition" },
  { k: "Type", v: "Total Deformation" },
  { k: "By", v: "Time" },
  { k: "Display Time", v: "Last", cb: true },
  { k: "Separate Data by Entity", v: "No" },
  { k: "Calculate Time History", v: "Yes" },
  { k: "Identifier", v: "" },
  { k: "Suppressed", v: "No" },
  { sec: "Results" },
  { k: "Minimum", v: "0. mm", cb: true, ro: true },
  { k: "Maximum", v: "1.8484 mm", cb: true, ro: true },
];

const DetailRow = ({ r }) => {
  if (r.sec)
    return (
      <div className="flex h-[22.45px] shrink-0">
        <span className="w-[17px] flex items-center justify-center">
          <Expander open />
        </span>
        <div className="flex-1 border-l-[1.5px] border-b-[1.5px] border-r-[1.5px] border-[#a8a8a8] bg-white pl-[4px] font-bold leading-[20px]">{r.sec}</div>
      </div>
    );
  return (
    <div className="flex h-[22.45px] shrink-0 pl-[17px]">
      <div className="w-[158px] border-l-[1.5px] border-b-[1.5px] border-[#a8a8a8] bg-white pl-[4px] flex items-center whitespace-nowrap">
        {r.cb && <span className="w-[14px] h-[14px] border border-[#c4c4c4] mr-[6px] shrink-0" />}
        {r.k}
      </div>
      <div className={`flex-1 border-l-[1.5px] border-b-[1.5px] border-r-[1.5px] border-[#a8a8a8] pl-[4px] leading-[20px] ${r.ro ? "bg-[#e8e7e3]" : "bg-white"}`}>{r.v}</div>
    </div>
  );
};

const LeftPanels = () => (
  <div className="w-[497px] shrink-0 flex flex-col">
    {/* Outline */}
    <div className="h-[497px] flex flex-col">
      <PanelHead title="Outline" active className="w-[490px] h-[25px]" />
      <div className="h-[34px] flex items-start pt-[2px] relative">
        <span className="ml-[15px] mr-[12px] mt-[4px]"><Grip /></span>
        <div className="w-[123px] h-[28px] bg-white border-2 border-[#e8e8ee] text-[14px] text-[#333] flex items-center justify-between px-[2px]">
          Name
          <span className="mr-[3px] flex"><Caret /></span>
        </div>
        <div className="w-[111px] h-[28px] ml-[2px] bg-white border-2 border-[#e8e8ee] text-[14px] tracking-normal text-[#aaa] flex items-center px-[3px] whitespace-nowrap">Search Outline</div>
        <span className="ml-[7px] mt-[11px]">
          <S w={14} h={9} vb="0 0 14 9">
            <path d="M1 1l6 6 6-6" fill="none" stroke="#d8a020" strokeWidth="2" />
          </S>
        </span>
        <span className="ml-[9px] mt-[19px] flex"><Caret color="#222" /></span>
      </div>
      <div className="flex flex-1">
        <div className="w-[470px] h-[432px] bg-white pt-0">
          {treeRows.map((r, i) => (
            <TreeRow key={i} r={r} />
          ))}
        </div>
        <div className="flex-1 relative">
          <span className="absolute left-[9px] top-[97px] w-[2px] h-[315px] bg-[#8c8c8c]" />
        </div>
      </div>
    </div>
    {/* Details */}
    <div className="h-[327px] flex flex-col overflow-hidden">
      <PanelHead title='Details of "Total Deformation"' className="w-[490px]" />
      <div className="flex flex-1 bg-white overflow-hidden -mt-[3px] border-t-0">
        <div className="w-[468px] flex flex-col text-[13.5px] text-[#2a2a2a] border-t-[1.5px] border-[#a8a8a8] mt-[3.5px]">
          {details.map((r, i) => (
            <DetailRow key={i} r={r} />
          ))}
        </div>
        <div className="flex-1 relative">
          <span className="absolute left-[12px] top-[20px] w-[2px] h-[188px] bg-[#8c8c8c]" />
        </div>
      </div>
    </div>
  </div>
);

// ---------- graph and table ----------
const Graph = () => (
  <div className="w-[808px] shrink-0 flex flex-col">
    <PanelHead title="Graph" />
    <div className="h-[34px] flex items-center text-[14px] text-[#2d2d30] tracking-normal">
      <span className="w-[14px] flex justify-end -mr-[2px]"><Grip /></span>
      <span className="ml-[17px] w-[78px]">Animation</span>
      <T w="w-[26px]">
        <S w={18} h={18} vb="0 0 18 18"><path d="M1 1h2v16H1zM15 2v14L6 9z" fill="#8a8a8a" /></S>
      </T>
      <T w="w-[27px]">
        <S w={14} h={18} vb="0 0 14 18"><path d="M1 1v16l12-8z" fill="#c9960c" /></S>
      </T>
      <T box w="w-[28px]"><span className="w-[16px] h-[16px] bg-[#c9960c] border border-[#555]" /></T>
      <T w="w-[24px]">
        <S w={18} h={18} vb="0 0 18 18"><path d="M15 1h2v16h-2zM3 2v14l9-7z" fill="#8a8a8a" /></S>
      </T>
      <VSep w="w-[8px]" />
      <T box w="w-[28px]">
        <S w={20} h={20} vb="0 0 20 20">
          <path d="M3 1h14v13H3zM7 1v13M12 1v13" fill="none" stroke="#20c020" strokeWidth="1.3" />
          <path d="M1 17h8M11 17h3M16 17h3" stroke="#e01010" strokeWidth="2" />
        </S>
      </T>
      <T w="w-[28px]">
        <S w={20} h={20} vb="0 0 20 20">
          <path d="M3 1h14v13H3zM7 1v13M12 1v13" fill="none" stroke="#2a7ad0" strokeWidth="1.3" />
          <path d="M1 17h8M11 17h3M16 17h3" stroke="#e01010" strokeWidth="2" />
        </S>
      </T>
      <VSep w="w-[8px]" />
      <div className="w-[124px] h-[28px] bg-white border-2 border-[#e6e6ec] flex items-center justify-between px-[4px] shrink-0">
        20 Frames
        <span className="mr-[4px] flex"><Caret /></span>
      </div>
      <div className="w-[125px] h-[28px] bg-white border-2 border-[#e6e6ec] flex items-center justify-between px-[4px] shrink-0">
        2 Sec (Auto)
        <span className="mr-[4px] flex"><Caret /></span>
      </div>
      <VSep w="w-[8px]" />
      <T w="w-[28px]">
        <S w={20} h={22} vb="0 0 20 22">
          <rect x="1" y="1" width="18" height="20" fill="#eee" stroke="#333" />
          <path d="M1 4h18" stroke="#333" strokeWidth="2" strokeDasharray="2 1" />
          <path d="M5 12a4 4 0 0 1 8-2" fill="none" stroke="#d04040" strokeWidth="1.5" />
          <rect x="9" y="12" width="7" height="7" fill="#5a9ae0" />
        </S>
      </T>
      <VSep w="w-[8px]" />
      <T w="w-[28px]"><Glass fill="#e0b020" /></T>
      <T w="w-[28px]">
        <S w={20} h={20} vb="0 0 20 20">
          <path d="M1 3h18" stroke="#e01010" strokeWidth="5" strokeDasharray="2 1" />
          <path d="M1 10h18" stroke="#10b010" strokeWidth="5" strokeDasharray="2 1" />
          <path d="M1 17h18" stroke="#1010e0" strokeWidth="5" strokeDasharray="2 1" />
        </S>
      </T>
      <T w="w-[28px]">
        <S w={18} h={18} vb="0 0 18 18"><path d="M11 2L7 8l-5 1M7 8l3 4-5 5M10 6l6-2M10 12l5 3" stroke="#aaa" strokeWidth="1.5" fill="none" /></S>
      </T>
      <T w="w-[28px]">
        <S w={20} h={18} vb="0 0 20 18"><path d="M1 11l9-8 7 6-8 7zM13 3l5 3" fill="#aaa" stroke="#999" /></S>
      </T>
      <VSep w="w-[4px]" />
      <T w="w-[30px]">
        <S w={19} h={18} vb="0 0 19 18"><rect x="1" y="1" width="17" height="16" fill="#bbb" /><path d="M1 3h17M1 15h17" stroke="#777" strokeDasharray="2 1" strokeWidth="2" /></S>
      </T>
      <T w="w-[28px]">
        <S w={19} h={18} vb="0 0 19 18"><rect x="1" y="1" width="17" height="16" fill="#bbb" /><path d="M1 3h17M1 15h17" stroke="#777" strokeDasharray="2 1" strokeWidth="2" /></S>
      </T>
      <VSep w="w-[4px]" />
      <T w="w-[28px]">
        <S w={18} h={18} vb="0 0 18 18"><path d="M2 1v16M5 4v10M8 6v6M11 8v2M1 9h16" stroke="#aaa" /></S>
      </T>
      <span className="flex flex-col items-center ml-[8px] mt-[2px]">
        <span className="text-[9px] leading-[9px] text-[#555]">»</span>
        <Caret color="#222" />
      </span>
    </div>
    <div className="h-[121px] bg-white relative shrink-0">
      <div className="absolute left-[15px] top-[10px] w-[40px] h-[40px] flex items-center justify-center">
        <span className="-rotate-90 font-bold text-[14px] tracking-[1px] whitespace-nowrap text-black">[mm]</span>
      </div>
      <div className="absolute left-[55px] top-[26px] w-[7px] h-[7px] bg-[#b0b0b0]" />
      <div className="absolute left-[61px] top-[30px] w-[719px] h-[15px]">
        <div className="h-[6px] border-y border-[#a8a8a8] border-r" />
        <div className="flex justify-between h-[9px]">
          {Array.from({ length: 11 }).map((_, i) => (
            <span key={i} className="w-px bg-[#a0a0a0]" />
          ))}
        </div>
      </div>
      <span className="absolute left-[61px] top-[28px] w-[2px] h-[4px] bg-[#0a8a0a]" />
      <span className="absolute left-[61px] top-[32px] w-[2px] h-[3px] bg-[#1010d0]" />
      <span className="absolute left-[61px] top-[35px] w-[2px] h-[2px] bg-[#c01010]" />
      <div className="absolute left-[416px] top-[60px] font-bold text-[14px] text-black">[s]</div>
      <div className="absolute left-[61px] top-[88px] w-[719px] h-[18px] border border-[#a8a8a8]" />
    </div>
    <div className="flex-1 flex items-start text-[14px]">
      <span className="px-[7px] h-[24px] leading-[24px] text-[#555]">Messages</span>
      <span className="px-[7px] h-[24px] leading-[24px] bg-white text-[#1f86d0] ml-px">Graph</span>
    </div>
  </div>
);

const ColCheck = () => (
  <span className="w-[16px] h-[17px] bg-white border-l border-t border-[#666] flex items-center justify-center shrink-0">
    <S w={10} h={10} vb="0 0 10 10">
      <path d="M1.5 5l2.5 3 4.5-7" fill="none" stroke="#000" strokeWidth="2" />
    </S>
  </span>
);

const Tabular = () => (
  <div className="flex-1 flex flex-col ml-[8px]">
    <PanelHead title="Tabular Data" />
    <div className="flex-1 bg-[#a0a0a0]">
      <div className="flex h-[24px] bg-[#eeeeee] w-[455px] text-[13px] tracking-normal font-medium border-b-2 border-[#9a9a9a]">
        <span className="w-[18px] border-r-2 border-[#bdbdbd]" />
        <span className="w-[59px] border-r-2 border-[#bdbdbd] text-center leading-[22px] text-[#222] whitespace-nowrap">Time [s]</span>
        <span className="w-[128px] border-r-2 border-[#bdbdbd] flex items-center pl-[3px] gap-[8px] text-[#d8202a] whitespace-nowrap"><ColCheck />Minimum [mm]</span>
        <span className="w-[131px] border-r-2 border-[#bdbdbd] flex items-center pl-[3px] gap-[8px] text-[#2ea02e] whitespace-nowrap"><ColCheck />Maximum [mm]</span>
        <span className="w-[119px] flex items-center pl-[3px] gap-[8px] text-[#3a3ae8] whitespace-nowrap"><ColCheck />Average [mm]</span>
      </div>
      <div className="flex h-[18px] bg-[#e8e7e3] w-[455px] text-[13.5px] text-[#222] leading-[17px] border-b border-[#bbb]">
        <span className="w-[18px] bg-[#eeeeee] border-r-2 border-b border-[#888] pl-[4px]">1</span>
        <span className="w-[59px] border-r border-[#c8c8c8] pl-[2px]">1.</span>
        <span className="w-[128px] border-r border-[#c8c8c8] pl-[3px]">0.</span>
        <span className="w-[131px] border-r border-[#c8c8c8] pl-[3px]">1.8484</span>
        <span className="w-[119px] pl-[3px]">0.41728</span>
      </div>
    </div>
  </div>
);

// ---------- status bar and taskbar ----------
const StatusBar = () => (
  <div className="h-[25px] bg-[#0078c8] text-white text-[14.5px] tracking-normal flex items-center justify-end pr-[9px] shrink-0 whitespace-nowrap">
    <S w={18} h={20} vb="0 0 18 20">
      <path d="M1 4h16v11H8l-4 5v-5H1z" fill="#f4d048" stroke="#a08020" strokeWidth=".7" />
      <path d="M9 1l5 11H4z" fill="#e02020" />
      <path d="M8.4 5h1.2v4H8.4zM8.4 10h1.2v1.2H8.4z" fill="#fff" />
    </S>
    <span className="ml-[3px]">4 Messages</span>
    <span className="ml-[22px]">No Selection</span>
    <span className="ml-[23px] mr-[8px] flex">
      <S w={12} h={7} vb="0 0 12 7"><path d="M6 0l6 7H0z" fill="#fff" /></S>
    </span>
    <span className="tracking-[0.17px]">Metric (mm, kg, N, s, mV, mA)</span>
    <span className="ml-[15px] tracking-[-0.5px]">Degrees</span>
    <span className="ml-[15px]">rad/s</span>
    <span className="ml-[15px]">Celsius</span>
  </div>
);

const GearBadge = ({ text, w = 30 }) => (
  <span className="relative bg-black flex flex-col items-center text-white leading-none" style={{ width: w, height: 36 }}>
    <Cog size={20} className="text-[#f0a010] mt-[1px]" strokeWidth={2.4} />
    <span className="absolute bottom-[1px] text-[10px] font-bold">{text}</span>
  </span>
);

const Office = ({ letter, back, front }) => (
  <S w={30} h={30} vb="0 0 30 30">
    <rect x="8" y="1" width="21" height="28" rx="2" fill={back} />
    <path d="M8 10h21M8 19h21" stroke="#ffffff" strokeOpacity=".25" />
    <rect x="1" y="8" width="15" height="15" rx="1.5" fill={front} />
    <text x="8.5" y="20" fontSize="12" fontWeight="700" textAnchor="middle" fill="#fff" fontFamily="Open Sans">{letter}</text>
  </S>
);

const ChromeIcon = () => (
  <S w={30} h={30} vb="0 0 30 30">
    <circle cx="15" cy="15" r="14" fill="#db4437" />
    <path d="M15 15L3 22a14 14 0 0 0 14 7z" fill="#0f9d58" />
    <path d="M15 15l2 14a14 14 0 0 0 11-19z" fill="#ffcd40" />
    <circle cx="15" cy="15" r="6.5" fill="#fff" />
    <circle cx="15" cy="15" r="5" fill="#4285f4" />
  </S>
);

const taskItems = [
  { k: "view", el: (
    <S w={28} h={28} vb="0 0 28 28">
      <rect x="1" y="9" width="17" height="18" rx="2" fill="#5c5c5c" />
      <rect x="10" y="1" width="17" height="18" rx="2" fill="#f2f2f2" />
      <rect x="10" y="9" width="8" height="10" fill="#b8b8b8" />
    </S>
  ) },
  { k: "snip", el: (
    <S w={30} h={30} vb="0 0 30 30">
      <rect x="2" y="1" width="20" height="22" rx="3" fill="#f0f0f0" />
      <path d="M6 13V6h8" fill="none" stroke="#e04020" strokeWidth="2" strokeDasharray="2 1.5" />
      <path d="M10 17l13 2M22 13l-9 13" stroke="#9a9a9a" strokeWidth="2" />
      <circle cx="26" cy="18" r="2.5" fill="none" stroke="#2a8fe0" strokeWidth="1.6" />
      <circle cx="12" cy="27" r="2.5" fill="none" stroke="#2a8fe0" strokeWidth="1.6" />
    </S>
  ) },
  { k: "settings", el: (
    <span className="relative flex items-center justify-center">
      <Cog size={32} className="text-[#7c8894]" strokeWidth={2.6} fill="#7c8894" />
      <span className="absolute w-[12px] h-[12px] rounded-full bg-[#1c66b4]" />
    </span>
  ) },
  { k: "monitor", el: (
    <S w={30} h={28} vb="0 0 30 28">
      <rect x="1" y="1" width="28" height="26" fill="#d8ecf8" stroke="#9ab4c8" />
      <path d="M1 24l5-4 3-14 3 14 3-6 3 7 3-12 3 14 5 2v3H1z" fill="#80b0e0" stroke="#2a70c0" />
    </S>
  ) },
  { k: "files", dot: true, el: (
    <S w={32} h={30} vb="0 0 32 30">
      <path d="M1 2h11l3 4h16v6H1z" fill="#d8a018" />
      <rect x="1" y="6" width="30" height="23" rx="1.5" fill="#fbd14b" />
      <rect x="10" y="20" width="12" height="9" rx="1" fill="#1a73c8" />
      <path d="M13 24h6" stroke="#fff" />
    </S>
  ) },
  { k: "dl", el: (
    <S w={28} h={30} vb="0 0 28 30">
      <path d="M1 1h10l3 4h13v24H1z" fill="#0b8a78" />
      <path d="M1 8h26v21H1z" fill="#12a08c" />
      <path d="M14 11v9M10 16l4 4 4-4M8 24h12" stroke="#fff" strokeWidth="1.6" fill="none" />
    </S>
  ) },
  { k: "tg", el: (
    <span className="w-[28px] h-[28px] rounded-full bg-[#2c9cdc] flex items-center justify-center"><FaTelegramPlane size={17} className="text-white" /></span>
  ) },
  { k: "chrome", el: <ChromeIcon /> },
  { k: "spotify", el: <FaSpotify size={30} className="text-[#1ed760]" /> },
  { k: "discord", el: (
    <span className="w-[30px] h-[30px] rounded-full bg-[#5865f2] flex items-center justify-center"><FaDiscord size={20} className="text-white" /></span>
  ) },
  { k: "word", dot: true, el: <Office letter="W" back="#2f7fd8" front="#1a50a8" /> },
  { k: "acro", dot: true, el: (
    <span className="w-[28px] h-[30px] rounded-[3px] bg-[#b00f0f] flex items-center justify-center">
      <S w={20} h={20} vb="0 0 20 20">
        <path d="M8 2c1 0 1 4 0 7s-4 8-6 8 0-4 6-6 8-1 9 1-5 1-8-3S7 2 8 2z" fill="none" stroke="#fff" strokeWidth="1.5" />
      </S>
    </span>
  ) },
  { k: "chrome2", dot: true, el: (
    <span className="relative flex">
      <ChromeIcon />
      <span className="absolute -right-[6px] -top-[6px] w-[20px] h-[20px] rounded-full bg-[linear-gradient(135deg,#d8d8d8,#4a4a4a)] border border-[#888]" />
    </span>
  ) },
  { k: "excel", dot: true, el: <Office letter="X" back="#21a366" front="#107c41" /> },
  { k: "wb", dot: true, el: <GearBadge text="WB" /> },
  { k: "m", active: true, el: <GearBadge text="M" /> },
];

const Taskbar = () => (
  <div className="h-[60px] bg-[#1c1c1c] border-t border-[#3a4a58] flex items-center text-white shrink-0">
    <S w={28} h={28} vb="0 0 28 28" className="ml-[26px]">
      <path d="M0 0h13v13H0zM15 0h13v13H15zM0 15h13v13H0zM15 15h13v13H15z" fill="#38b6f5" />
    </S>
    <div className="ml-[18px] w-[274px] h-[40px] rounded-full bg-[#3a3a3a] flex items-center pl-[15px] pr-[8px] text-[#c8c8c8] text-[16px] shrink-0">
      <Search size={20} className="text-[#dedede]" />
      <span className="ml-[12px] flex-1">Search</span>
      <span className="w-[24px] h-[24px] rounded-full bg-white border-2 border-[#1b7fe0] flex items-center justify-center text-[#1b6fd8] text-[14px] font-bold leading-none">b</span>
    </div>
    <div className="ml-[3px] flex h-full items-center">
      {taskItems.map((it) => (
        <span key={it.k} className="relative w-[55px] h-full flex items-center justify-center">
          {it.active && <span className="absolute left-[2px] right-[2px] top-[5px] bottom-[5px] rounded-[5px] bg-[#2e2e2e] border-r border-[#444]" />}
          <span className="relative flex -mt-[3px]">{it.el}</span>
          {it.dot && <span className="absolute bottom-[6px] w-[5px] h-[5px] rounded-full bg-[#8e8e8e]" />}
          {it.active && <span className="absolute bottom-[6px] w-[20px] h-[4px] rounded-[2px] bg-[#f08070]" />}
        </span>
      ))}
    </div>
    <div className="ml-auto flex items-center text-[14.5px] tracking-normal pr-[26px] h-full">
      <ChevronUp size={22} strokeWidth={2} />
      <div className="ml-[12px] w-[48px] text-center leading-[20px]">
        <div>ENG</div>
        <div>US</div>
      </div>
      <Wifi size={20} className="ml-[13px]" />
      <Volume1 size={20} className="ml-[9px]" />
      <BatteryCharging size={20} className="ml-[11px]" />
      <div className="ml-[20px] text-right leading-[20px] whitespace-nowrap">
        <div>10:45 PM</div>
        <div>20/6/2023</div>
      </div>
      <span className="ml-[8px] w-[20px] h-[20px] rounded-full bg-[#f08070] text-[#1c1c1c] text-[11px] flex items-center justify-center">3</span>
    </div>
  </div>
);

// ---------- title and tabs ----------
const TitleBar = () => (
  <div className="h-[32px] flex items-start text-[13.5px] text-[#555] shrink-0">
    <div className="w-[154px] h-full flex items-start relative shrink-0">
      <span className="ml-[10px] mt-[4px] w-[20px] h-[20px] bg-black flex items-center justify-center">
        <Cog size={15} className="text-[#f0a010]" strokeWidth={2.6} />
      </span>
      <span className="ml-[9px] h-[28px] w-px bg-[#d8d8dc]" />
      <span className="ml-[7px] mt-[5px] flex">
        <S w={18} h={18} vb="0 0 18 18">
          <path d="M1 1h13l3 3v13H1z" fill="#eaf3fc" stroke="#4a90e0" />
          <path d="M4 1v6h8V1M5 17v-6h8v6" fill="none" stroke="#4a90e0" />
        </S>
      </span>
      <span className="ml-[6px] mt-[9px] flex flex-col gap-[1px]">
        <span className="w-[8px] h-px bg-[#555]" />
        <Caret />
      </span>
    </div>
    <div className="w-[73px] h-full bg-[#d6e3f3] border-t-[5px] border-[#2f5597] text-[#3f72b0] text-center text-[14px] leading-[28px] shrink-0">Context</div>
    <div className="flex-1 text-center leading-[36px] text-[13.5px] tracking-normal whitespace-nowrap">Systems A,B,C - Mechanical [Ansys Mechanical Enterprise]</div>
    <div className="w-[231px] flex items-center justify-end pr-[14px] gap-[27px] h-[36px] text-[#222] shrink-0">
      <Minus size={16} strokeWidth={3} />
      <S w={14} h={16} vb="0 0 14 16">
        <path d="M4 3V1h9v9h-3M1 5h9v10H1z" fill="none" stroke="#222" strokeWidth="1.5" />
      </S>
      <X size={18} strokeWidth={2.8} />
    </div>
  </div>
);

const tabs = [
  ["File", "w-[71px] bg-[#0078c8] text-white"],
  ["Home", "w-[83px] pl-[3px]"],
  ["Result", "w-[73px] bg-[#fbfbfb] border-x border-t border-[#cfcfd4] relative z-10"],
  ["Display", "w-[86px]"],
  ["Selection", "w-[90px]"],
  ["Automation", "w-[118px]"],
  ["Add-ons", "w-[86px]"],
];

const TabRow = () => (
  <div className="h-[30px] flex items-start border-b-2 border-[#cfcfd4] text-[14px] text-[#333] shrink-0">
    {tabs.map(([t, c]) => (
      <div key={t} className={`${c} shrink-0 text-center leading-[32px] h-[29px]`}>{t}</div>
    ))}
    <div className="ml-auto flex items-center h-full pr-[4px]">
      <div className="w-[199px] h-[25px] mt-[1px] bg-white border-2 border-[#e2e2ea] text-[#a8a8a8] text-[14px] leading-[21px] px-[3px]">Quick Launch</div>
      <span className="ml-[5px] flex">
        <S w={16} h={10} vb="0 0 16 10"><path d="M1 9l7-7 7 7" fill="none" stroke="#d8a020" strokeWidth="2.2" /></S>
      </span>
      <span className="ml-[9px] flex">
        <S w={18} h={20} vb="0 0 18 20">
          <path d="M1 5l12-3 3 13-12 3z" fill="#f5f5f5" stroke="#777" />
          <path d="M5 10l2 4 7-11" fill="none" stroke="#d8a020" strokeWidth="1.8" />
        </S>
      </span>
      <span className="ml-[9px] w-[18px] h-[18px] rounded-full bg-[#2f8fe8] text-white text-[13px] font-bold flex items-center justify-center">?</span>
      <span className="ml-[1px] flex"><Caret color="#333" /></span>
    </div>
  </div>
);

export default function App() {
  return (
    <div className="w-[1920px] h-[1080px] overflow-hidden flex flex-col bg-[#eeeef2] font-['Open_Sans',sans-serif] tracking-[-0.2px]">
      <TitleBar />
      <TabRow />
      <Ribbon />
      <div className="h-[824px] flex shrink-0">
        <LeftPanels />
        <div className="flex-1 flex flex-col min-w-0">
          <ViewToolbar />
          <Viewport />
          <div className="flex-1 flex pt-[6px] min-h-0">
            <Graph />
            <Tabular />
          </div>
        </div>
      </div>
      <StatusBar />
      <Taskbar />
    </div>
  );
}
